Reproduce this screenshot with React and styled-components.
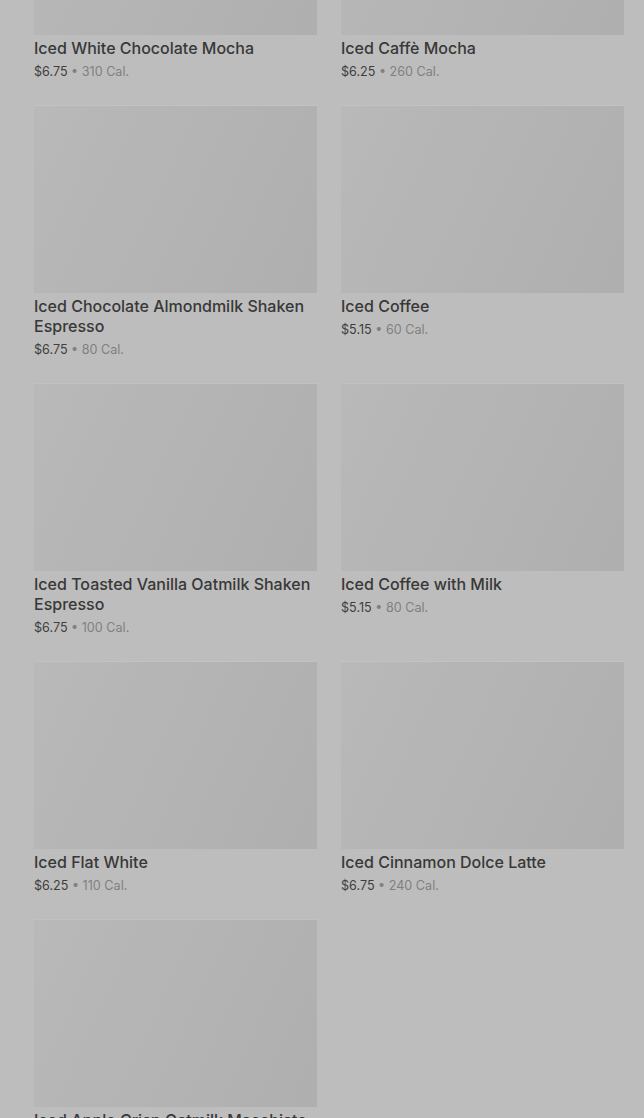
import React from "react";
import styled, { createGlobalStyle } from "styled-components";

const Global = createGlobalStyle`
  html, body { margin: 0; padding: 0; background: #bdbdbd; }
  body { font-family: Inter, "Liberation Sans", sans-serif; overflow: hidden; }
  * { box-sizing: border-box; }
`;

const Page = styled.div`
  width: 644px;
  height: 1118px;
  overflow: hidden;
  background: #bdbdbd;
`;

const Grid = styled.div`
  display: grid;
  grid-template-columns: 283px 283px;
  column-gap: 24px;
  row-gap: 24px;
  padding: 0 20px 0 34px;
  margin-top: -152px;
  align-items: start;
`;

const Card = styled.div`
  display: flex;
  flex-direction: column;
`;

const Thumb = styled.div`
  width: 283px;
  height: 187px;
  background: linear-gradient(115deg, #b9b9b9 0%, #b4b4b4 45%, #afafaf 100%);
  box-shadow: 0 -1px 0 rgba(255, 255, 255, 0.08);
`;

const Title = styled.div`
  margin-top: 3px;
  font-size: 16px;
  line-height: 20px;
  font-weight: 500;
  color: #383838;
`;

const Meta = styled.div`
  margin-top: 4px;
  font-size: 12.6px;
  line-height: 20px;
  color: #808080;
`;

const Price = styled.span`
  color: #3e3e3e;
`;

const items = [
  ["Iced White Chocolate Mocha", "$6.75", "310"],
  ["Iced Caffè Mocha", "$6.25", "260"],
  ["Iced Chocolate Almondmilk Shaken Espresso", "$6.75", "80"],
  ["Iced Coffee", "$5.15", "60"],
  ["Iced Toasted Vanilla Oatmilk Shaken Espresso", "$6.75", "100"],
  ["Iced Coffee with Milk", "$5.15", "80"],
  ["Iced Flat White", "$6.25", "110"],
  ["Iced Cinnamon Dolce Latte", "$6.75", "240"],
  ["Iced Apple Crisp Oatmilk Macchiato", "$6.75", "230"],
];

export default function App() {
  return (
    <Page>
      <Global />
      <Grid>
        {items.map(([name, price, cal]) => (
          <Card key={name}>
            <Thumb />
            <Title>{name}</Title>
            <Meta>
              <Price>{price}</Price> • {cal} Cal.
            </Meta>
          </Card>
        ))}
      </Grid>
    </Page>
  );
}
